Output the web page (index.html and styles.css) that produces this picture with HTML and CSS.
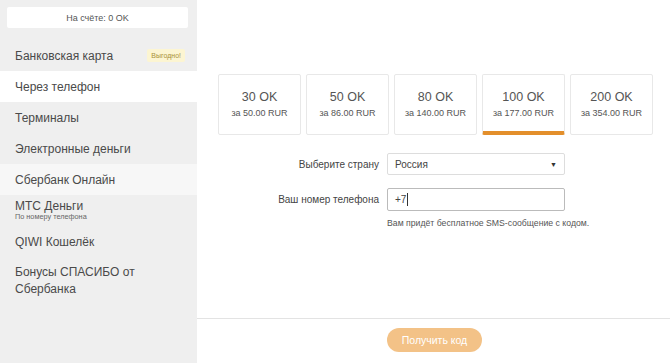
FILE: index.html
```html
<!DOCTYPE html>
<html lang="ru">
<head>
<meta charset="utf-8">
<link rel="stylesheet" href="styles.css">
</head>
<body>
<div class="page">
  <aside class="sidebar">
    <div class="balance">На счёте: 0 OK</div>
    <ul class="menu">
      <li class="item"><span>Банковская карта</span><span class="badge">Выгодно!</span></li>
      <li class="item selected"><span>Через телефон</span></li>
      <li class="item"><span>Терминалы</span></li>
      <li class="item"><span>Электронные деньги</span></li>
      <li class="item light"><span>Сбербанк Онлайн</span></li>
      <li class="item tall"><span class="two"><span>МТС Деньги</span><span class="sub">По номеру телефона</span></span></li>
      <li class="item"><span>QIWI Кошелёк</span></li>
      <li class="item multi"><span>Бонусы СПАСИБО от<br>Сбербанка</span></li>
    </ul>
  </aside>
  <main class="main">
    <section class="content">
      <div class="cards">
        <div class="card"><div class="amount">30 OK</div><div class="price">за 50.00 RUR</div></div>
        <div class="card"><div class="amount">50 OK</div><div class="price">за 86.00 RUR</div></div>
        <div class="card"><div class="amount">80 OK</div><div class="price">за 140.00 RUR</div></div>
        <div class="card active"><div class="amount">100 OK</div><div class="price">за 177.00 RUR</div></div>
        <div class="card"><div class="amount">200 OK</div><div class="price">за 354.00 RUR</div></div>
      </div>
      <div class="form">
        <div class="label">Выберите страну</div>
        <div class="select"><span>Россия</span><span class="arrow">▼</span></div>
        <div class="label">Ваш номер телефона</div>
        <div class="input"><span>+7</span><span class="caret"></span></div>
        <div></div>
        <div class="hint">Вам придёт бесплатное SMS-сообщение с кодом.</div>
      </div>
    </section>
    <footer class="footer">
      <button class="btn">Получить код</button>
    </footer>
  </main>
</div>
</body>
</html>
```

FILE: styles.css
```css
html, body {
  margin: 0;
  padding: 0;
  background: #ffffff;
  font-family: "Liberation Sans", Arial, sans-serif;
  color: #444;
}
.page {
  display: flex;
  width: 670px;
  height: 363px;
  overflow: hidden;
}
.sidebar {
  width: 197px;
  flex: none;
  background: #efefef;
  padding-top: 7px;
  box-sizing: border-box;
}
.balance {
  margin: 0 9px 0 7px;
  height: 21px;
  background: #fff;
  border-radius: 2px;
  font-size: 9px;
  color: #555;
  display: flex;
  align-items: center;
  justify-content: center;
}
.menu {
  list-style: none;
  margin: 12px 0 0 0;
  padding: 0;
}
.item {
  height: 31px;
  display: flex;
  align-items: center;
  justify-content: space-between;
  padding: 0 12px 0 15px;
  font-size: 12px;
  color: #4a4a4a;
}
.item.selected { background: #fff; }
.item.light { background: #f7f7f7; }
.item.tall {
  height: 31px;
  align-items: flex-start;
  padding-top: 4px;
  box-sizing: border-box;
}
.two { display: flex; flex-direction: column; line-height: 14px; }
.sub { font-size: 7.3px; color: #666; line-height: 8px; }
.item.multi {
  height: auto;
  padding-top: 7px;
  line-height: 17px;
}
.badge {
  background: #fcf5d2;
  color: #a8923a;
  font-size: 7px;
  padding: 3px 4px;
  border-radius: 2px;
}
.main {
  flex: 1;
  display: flex;
  flex-direction: column;
}
.content {
  flex: none;
  box-sizing: border-box;
  padding: 74px 0 0 21px;
  height: 318px;
}
.cards {
  display: flex;
  gap: 5px;
}
.card {
  width: 83px;
  height: 61px;
  box-sizing: border-box;
  border: 1px solid #e8e8e8;
  border-radius: 2px;
  display: flex;
  flex-direction: column;
  align-items: center;
  justify-content: center;
  padding-bottom: 2px;
}
.card.active {
  border-bottom: 4px solid #e38f2b;
  padding-bottom: 0;
  padding-top: 1px;
}
.amount {
  font-size: 12.5px;
  color: #555;
  line-height: 15px;
}
.price {
  font-size: 9px;
  color: #555;
  margin-top: 3px;
}
.form {
  display: grid;
  grid-template-columns: 161px 178px;
  column-gap: 8px;
  row-gap: 13px;
  margin-top: 18px;
}
.label {
  text-align: right;
  font-size: 10px;
  color: #444;
  align-self: center;
}
.select, .input {
  box-sizing: border-box;
  border: 1px solid #ddd;
  border-radius: 2px;
  font-size: 10px;
  color: #444;
  display: flex;
  align-items: center;
  padding: 0 7px;
}
.select { height: 22px; justify-content: space-between; }
.input { height: 23px; border-color: #bbb; }
.arrow { font-size: 7px; color: #333; }
.caret {
  display: inline-block;
  width: 1px;
  height: 13px;
  background: #333;
  margin-left: 1px;
}
.hint {
  font-size: 8.7px;
  color: #555;
  margin-top: -6px;
  white-space: nowrap;
}
.footer {
  border-top: 1px solid #e3e3e3;
  display: flex;
  justify-content: center;
  padding-top: 9px;
  padding-left: 2px;
}
.btn {
  width: 95px;
  height: 24px;
  border: none;
  border-radius: 12px;
  background: #f3c287;
  color: #fff;
  font-family: "Liberation Sans", Arial, sans-serif;
  font-size: 10.5px;
  padding: 0;
}
```
